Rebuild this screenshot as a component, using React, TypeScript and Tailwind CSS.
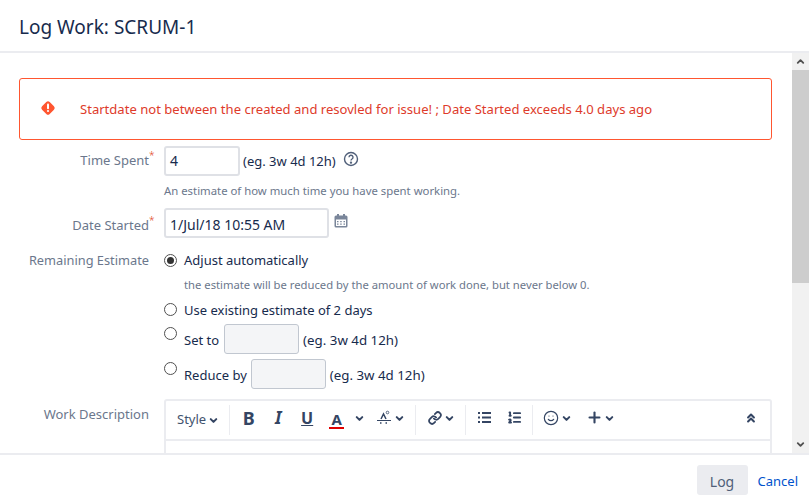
import React from 'react'
import { ChevronDown, ChevronUp, Link, ListOrdered, Plus, Smile, ChevronsUp } from 'lucide-react'

const font = "font-['Noto_Sans',sans-serif]"

const Label = ({ text, star }: { text: string; star?: boolean }) => (
    <div className="w-[149px] shrink-0 text-right text-[#6b778c] text-[13px] leading-5 relative">
        {text}
        {star ? <span className="absolute left-full top-[-5px] text-[#de350b] text-[10px] font-light">*</span> : null}
    </div>
)

const Radio = ({ checked }: { checked?: boolean }) => (
    <span className="w-[13px] h-[13px] shrink-0 rounded-full border border-[#505050] bg-white flex items-center justify-center">
        {checked ? <span className="w-[7px] h-[7px] rounded-full bg-[#333333]" /> : null}
    </span>
)

const Sep = () => <div className="w-px h-[30px] bg-[#ebecf0]" />
const Chev = () => <ChevronDown size={11} strokeWidth={4.5} className="text-[#344563]" />

const App = () => {
    return (
        <div className={`w-[809px] h-[503px] bg-white flex flex-col overflow-hidden ${font}`}>
            <div className="h-[53px] shrink-0 flex items-center px-[19px] pt-[2px] border-b-2 border-[#ebecf0]">
                <h2 className="text-[19px] text-[#172b4d] leading-6">Log Work: SCRUM-1</h2>
            </div>

            <div className="h-[400px] flex overflow-hidden">
                <div className="flex-1 overflow-hidden pl-[19px] pr-5 pt-[25px]">
                    <div className="h-[62px] border border-[#ff5630] rounded-[3px] flex items-center">
                        <svg width="16" height="16" viewBox="0 0 16 16" className="ml-[20px] mb-[2px]">
                            <rect x="2.6" y="2.6" width="10.8" height="10.8" rx="2.4" transform="rotate(45 8 8)" fill="#ff5630" />
                            <rect x="7" y="3.6" width="2" height="5.6" rx="1" fill="#fff" />
                            <circle cx="8" cy="11" r="1.1" fill="#fff" />
                        </svg>
                        <span className="ml-[24px] text-[13.07px] text-[#de3b2b] leading-5 whitespace-nowrap">
                            Startdate not between the created and resovled for issue! ; Date Started exceeds 4.0 days ago
                        </span>
                    </div>

                    <div className="mt-[6px] ml-[-19px] flex">
                        <div className="pt-[4px]"><Label text="Time Spent" star /></div>
                        <div className="ml-[15px] text-sm text-[#172b4d]">
                            <div className="flex items-center gap-1">
                                <div className="w-[76px] h-[30px] border-2 border-[#dfe1e6] rounded-[3px] px-1 leading-[26px]">4</div>
                                <span className="text-[13px] ml-[-1px]">(eg. 3w 4d 12h)</span>
                                <svg width="16" height="16" viewBox="0 0 16 16" fill="none" stroke="#505f79" strokeWidth="1.4" className="ml-[3px] mb-[4px]">
                                    <circle cx="8" cy="8" r="6.5" />
                                    <path d="M6 6.3a2 2 0 1 1 3 1.7c-.7.4-1 .8-1 1.6" />
                                    <circle cx="8" cy="11.6" r=".5" fill="#505f79" />
                                </svg>
                            </div>
                            <p className="mt-[7px] text-[11.35px] leading-4 text-[#6b778c] whitespace-nowrap">An estimate of how much time you have spent working.</p>
                        </div>
                    </div>

                    <div className="mt-[9px] ml-[-19px] flex">
                        <div className="pt-[7px]"><Label text="Date Started" star /></div>
                        <div className="ml-[15px] flex text-sm text-[#172b4d]">
                            <div className="w-[165px] h-[30px] border-2 border-[#dfe1e6] rounded-[3px] px-[4px] leading-[29px]">1/Jul/18 10:55 AM</div>
                            <svg width="16" height="16" viewBox="0 0 16 16" className="ml-[4px] mt-[5px]">
                                <rect x="1.5" y="2.5" width="13" height="12" rx="1.5" fill="#7a869a" />
                                <rect x="4" y="1" width="2" height="3" fill="#7a869a" />
                                <rect x="10" y="1" width="2" height="3" fill="#7a869a" />
                                <path d="M3 6.5h10v6.5H3z" fill="#fff" />
                                <path d="M4 8h1.5v1.2H4zM7.2 8h1.5v1.2H7.2zM10.5 8H12v1.2h-1.5zM4 10.5h1.5v1.2H4zM7.2 10.5h1.5v1.2H7.2zM10.5 10.5H12v1.2h-1.5z" fill="#7a869a" />
                            </svg>
                        </div>
                    </div>

                    <div className="mt-[13px] ml-[-19px] flex">
                        <div className="mt-[-1px] w-[149px] shrink-0 text-right text-[#6b778c] text-[12.8px] leading-5">Remaining Estimate</div>
                        <div className="ml-[15px] text-[13px] text-[#172b4d]">
                            <div className="flex items-center gap-[7px] h-5">
                                <span className="mb-[2px]"><Radio checked /></span>
                                <span>Adjust automatically</span>
                            </div>
                            <p className="mt-[6px] ml-[20px] text-[11.25px] leading-4 text-[#6b778c] whitespace-nowrap">the estimate will be reduced by the amount of work done, but never below 0.</p>
                            <div className="mt-[8px] flex items-center gap-[7px] h-5">
                                <span className="mb-[3px]"><Radio /></span>
                                <span>Use existing estimate of 2 days</span>
                            </div>
                            <div className="mt-[3px] flex items-start gap-[7px] h-[30px]">
                                <span className="mt-[3px]"><Radio /></span>
                                <span className="mt-[6px] leading-5">Set to</span>
                                <div className="ml-[-2px] w-[75px] h-[30px] bg-[#f4f5f7] border border-[#c1c7d0] rounded-[3px]" />
                                <span className="ml-[-3px] mt-[6px] leading-5 text-[13.3px]">(eg. 3w 4d 12h)</span>
                            </div>
                            <div className="mt-[5px] flex items-start gap-[7px] h-[30px]">
                                <span className="mt-[3px]"><Radio /></span>
                                <span className="mt-[6px] leading-5">Reduce by</span>
                                <div className="ml-[-3px] w-[75px] h-[30px] bg-[#f4f5f7] border border-[#c1c7d0] rounded-[3px]" />
                                <span className="ml-[-3px] mt-[6px] leading-5 text-[13.3px]">(eg. 3w 4d 12h)</span>
                            </div>
                        </div>
                    </div>

                    <div className="mt-[10px] ml-[-19px] flex">
                        <div className="pt-[5px]"><Label text="Work Description" /></div>
                        <div className="ml-[15px] w-[608px] h-[70px] border-2 border-[#ebecf0] rounded-[3px] text-[#344563]">
                            <div className="h-[40px] border-b-2 border-[#ebecf0] flex items-center">
                                <span className="ml-[11px] text-[13px] text-[#42526e]">Style</span>
                                <span className="ml-[2px]"><Chev /></span>
                                <span className="ml-[10px]"><Sep /></span>
                                <span className="ml-[11px] mb-[5px] w-[15px] text-[18px] font-bold text-center leading-5">B</span>
                                <span className="ml-[15px] mb-[5px] w-[14px] text-[17px] font-bold italic text-center leading-5">I</span>
                                <span className="ml-[15px] mb-[5px] w-[14px] text-[16px] font-bold text-center underline leading-5">U</span>
                                <span className="ml-[15px] mb-[1px] w-[15px] text-[15px] font-bold text-center leading-4 border-b-2 border-[#e00000]">A</span>
                                <span className="ml-[10px] mb-[3px]"><Chev /></span>
                                <svg width="14" height="16" viewBox="0 0 14 16" fill="none" stroke="#344563" className="ml-[12px] mb-[5px]">
                                    <path d="M4 9l2.5-5L9 9" strokeWidth="1.5" />
                                    <circle cx="10.5" cy="2.5" r="1.3" strokeWidth=".8" />
                                    <path d="M0 10.5h14" strokeWidth="1" />
                                    <path d="M3 13h1.5M8.5 13h1.5" strokeWidth="1.5" />
                                </svg>
                                <span className="ml-[3px] mb-[3px]"><Chev /></span>
                                <span className="ml-[10px]"><Sep /></span>
                                <Link size={14} strokeWidth={3} className="ml-[12px] mb-[5px]" />
                                <span className="ml-[2px] mb-[3px]"><Chev /></span>
                                <span className="ml-[10px]"><Sep /></span>
                                <svg width="15" height="15" viewBox="0 0 15 15" fill="#344563" className="ml-[11px] mb-[5px]">
                                    <path d="M1 2h2v2H1zM1 6.5h2v2H1zM1 11h2v2H1zM5 2h9v2H5zM5 6.5h9v2H5zM5 11h9v2H5z" />
                                </svg>
                                <ListOrdered size={15} strokeWidth={3} className="ml-[15px] mb-[5px]" />
                                <span className="ml-[10px]"><Sep /></span>
                                <Smile size={16} strokeWidth={1.8} className="ml-[10px] mb-[5px]" />
                                <span className="ml-[2px] mb-[3px]"><Chev /></span>
                                <Plus size={17} strokeWidth={3} className="ml-[14px] mb-[5px]" />
                                <span className="ml-[1px] mb-[3px]"><Chev /></span>
                                <ChevronsUp size={14} strokeWidth={3.5} className="ml-auto mr-[12px] mb-[5px]" />
                            </div>
                        </div>
                    </div>
                </div>

                <div className="w-[17px] shrink-0 bg-[#f1f1f1] flex flex-col">
                    <div className="h-[17px] flex items-center justify-center"><ChevronUp size={11} strokeWidth={4} className="text-[#505050]" /></div>
                    <div className="h-[213px] bg-[#cdcdcd]" />
                    <div className="flex-1" />
                    <div className="h-[17px] flex items-center justify-center"><ChevronDown size={11} strokeWidth={4} className="text-[#505050]" /></div>
                </div>
            </div>

            <div className="flex-1 border-t-2 border-[#ebecf0] flex items-start justify-end pt-[10px] pr-[11px]">
                <button type="button" className="w-[51px] h-[30px] pt-[3px] bg-[#ebecf0] rounded-[3px] text-sm text-[#505f79]">Log</button>
                <a className="ml-[10px] pt-[1px] leading-[30px] text-[13px] text-[#0052cc]">Cancel</a>
            </div>
        </div>
    )
}

export default App
